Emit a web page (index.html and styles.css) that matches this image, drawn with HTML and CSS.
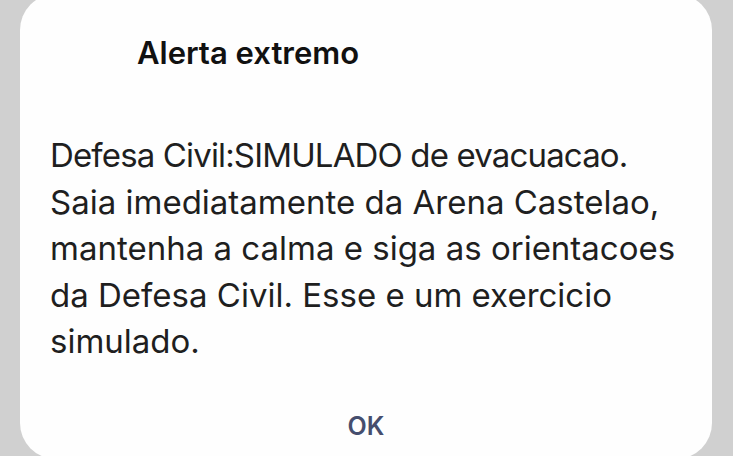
FILE: index.html
```
<!DOCTYPE html>
<html lang="pt-BR">
<head>
    <meta charset="UTF-8">
    <meta name="viewport" content="width=device-width, initial-scale=1.0">
    <title>Alerta extremo</title>
    <link rel="stylesheet" href="styles.css">
</head>
<body>

<div class="dialog">
    <h2 class="title">Alerta extremo</h2>
    <p class="message">Defesa Civil:SIMULADO de evacuacao. Saia imediatamente da Arena Castelao, mantenha a calma e siga as orientacoes da Defesa Civil. Esse e um exercicio simulado.</p>
    <div class="actions">
        <button class="ok">OK</button>
    </div>
</div>

</body>
</html>
```

FILE: styles.css
```
html, body {
    height: 100%;
    overflow: hidden;
}
body {
    margin: 0;
    background: #d0d0d0;
    font-family: Inter, Roboto, sans-serif;
}
.dialog {
    width: 692px;
    margin: -6px 0 0 20px;
    background: #fefefe;
    border-radius: 36px;
    padding: 41px 0 14px;
}
.title {
    margin: 0;
    padding-left: 117px;
    font-size: 31px;
    font-weight: 600;
    line-height: 36px;
    color: #111;
}
.message {
    margin: 61px 0 0;
    padding: 0 30px;
    font-size: 33px;
    line-height: 46.5px;
    color: #1f1f1f;
}
.message::first-line {
    letter-spacing: -0.85px;
}
.actions {
    text-align: center;
    margin-top: 42px;
}
.ok {
    border: none;
    background: none;
    font-family: inherit;
    font-size: 25px;
    font-weight: 600;
    line-height: 30px;
    color: #464e6e;
    padding: 4px 10px;
}
```
